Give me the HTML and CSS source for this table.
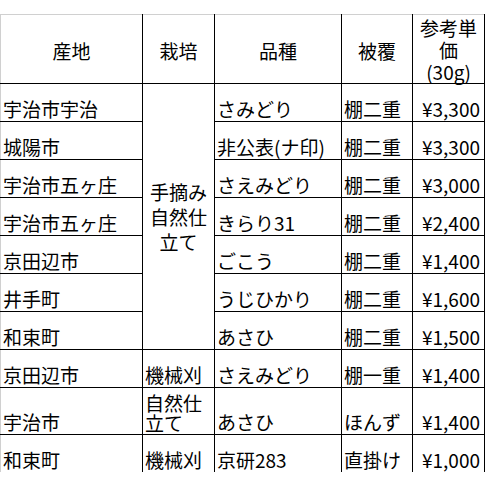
FILE: index.html
```html
<!DOCTYPE html>
<html lang="ja">
<head>
<meta charset="utf-8">
<title>参考単価</title>
<link rel="stylesheet" href="styles.css">
</head>
<body>
<div class="sheet">
<table class="grid">
<colgroup><col class="c1"><col class="c2"><col class="c3"><col class="c4"><col class="c5"></colgroup>
<thead>
<tr class="head"><th>産地</th><th>栽培</th><th>品種</th><th>被覆</th><th class="price-h">参考単<br>価<br>(30g)</th></tr>
</thead>
<tbody>
<tr><td>宇治市宇治</td><td rowspan="7" class="method">手摘み<br>自然仕<br>立て</td><td>さみどり</td><td>棚二重</td><td class="num">¥3,300</td></tr>
<tr><td>城陽市</td><td>非公表(ナ印)</td><td>棚二重</td><td class="num">¥3,300</td></tr>
<tr><td>宇治市五ヶ庄</td><td>さえみどり</td><td>棚二重</td><td class="num">¥3,000</td></tr>
<tr><td>宇治市五ヶ庄</td><td>きらり31</td><td>棚二重</td><td class="num">¥2,400</td></tr>
<tr><td>京田辺市</td><td>ごこう</td><td>棚二重</td><td class="num">¥1,400</td></tr>
<tr><td>井手町</td><td>うじひかり</td><td>棚二重</td><td class="num">¥1,600</td></tr>
<tr><td>和束町</td><td>あさひ</td><td>棚二重</td><td class="num">¥1,500</td></tr>
<tr><td>京田辺市</td><td>機械刈</td><td>さえみどり</td><td>棚一重</td><td class="num">¥1,400</td></tr>
<tr class="tall"><td>宇治市</td><td class="wrap">自然仕<br>立て</td><td>あさひ</td><td>ほんず</td><td class="num">¥1,400</td></tr>
<tr><td>和束町</td><td>機械刈</td><td>京研283</td><td>直掛け</td><td class="num">¥1,000</td></tr>
</tbody>
</table>
</div>
</body>
</html>
```

FILE: styles.css
```css
html, body {
  margin: 0;
  padding: 0;
  background: #fff;
}
body {
  font-family: "Noto Sans CJK JP", sans-serif;
  font-size: 19px;
  color: #000;
}
.sheet {
  padding-top: 14px;
  height: 458px;
  overflow: hidden;
}
.grid {
  border-collapse: collapse;
  table-layout: fixed;
  width: 485px;
}
.c1 { width: 142px; }
.c2 { width: 72px; }
.c3 { width: 127px; }
.c4 { width: 71px; }
.c5 { width: 72px; }
.grid td,
.grid th {
  border: 1px solid #000;
  padding: 0 2px 1px;
  font-weight: normal;
  text-align: left;
  vertical-align: bottom;
  line-height: 22px;
  height: 36px;
  white-space: nowrap;
  overflow: hidden;
}
.grid tr > :first-child {
  border-left-color: #d0d0d0;
}
.head th {
  height: 64px;
  padding: 4px 0 0;
  border-top-color: #d0d0d0;
  text-align: center;
  vertical-align: middle;
}
.head .price-h {
  line-height: 22px;
  padding: 2px 0 0;
  height: 62px;
  vertical-align: top;
  overflow: visible;
}
.grid .method {
  text-align: center;
  vertical-align: middle;
  line-height: 25px;
}
.grid .num {
  text-align: right;
  padding-right: 4px;
}
.tall td {
  height: 45px;
}
.grid .wrap {
  line-height: 20px;
}
```
